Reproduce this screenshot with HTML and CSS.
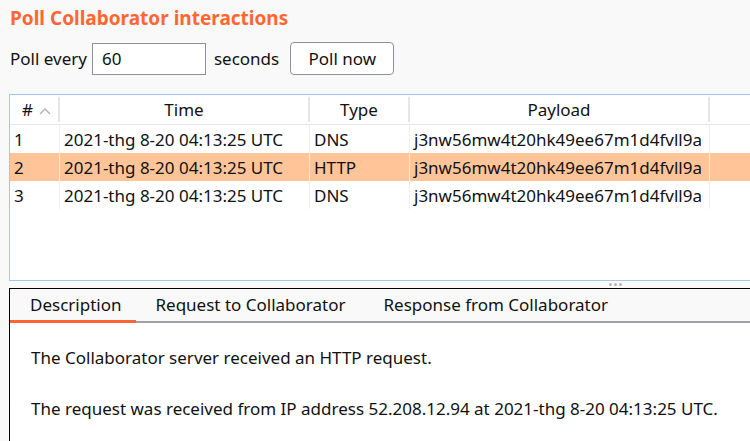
FILE: index.html
```html
<!DOCTYPE html>
<html>
<head>
<meta charset="utf-8">
<link rel="stylesheet" href="styles.css">
</head>
<body>
<div class="page">
  <h1 class="title">Poll Collaborator interactions</h1>
  <div class="controls">
    <span class="label">Poll every</span>
    <div class="input">60</div>
    <span class="label">seconds</span>
    <button class="btn">Poll now</button>
  </div>
  <div class="table-panel">
    <div class="row head">
      <div class="c c-num">#<svg class="caret" width="12" height="8" viewBox="0 0 12 8"><path d="M1 7 L6 2 L11 7" fill="none" stroke="#b0b0b0" stroke-width="1.3"/></svg></div>
      <div class="c c-time center">Time</div>
      <div class="c c-type center">Type</div>
      <div class="c c-pay center">Payload</div>
      <div class="c c-rest"></div>
    </div>
    <div class="row">
      <div class="c c-num">1</div>
      <div class="c c-time">2021-thg 8-20 04:13:25 UTC</div>
      <div class="c c-type">DNS</div>
      <div class="c c-pay">j3nw56mw4t20hk49ee67m1d4fvll9a</div>
      <div class="c c-rest"></div>
    </div>
    <div class="row sel">
      <div class="c c-num">2</div>
      <div class="c c-time">2021-thg 8-20 04:13:25 UTC</div>
      <div class="c c-type">HTTP</div>
      <div class="c c-pay">j3nw56mw4t20hk49ee67m1d4fvll9a</div>
      <div class="c c-rest"></div>
    </div>
    <div class="row">
      <div class="c c-num">3</div>
      <div class="c c-time">2021-thg 8-20 04:13:25 UTC</div>
      <div class="c c-type">DNS</div>
      <div class="c c-pay">j3nw56mw4t20hk49ee67m1d4fvll9a</div>
      <div class="c c-rest"></div>
    </div>
  </div>
  <div class="splitter"><span class="dot"></span><span class="dot"></span><span class="dot"></span></div>
  <div class="detail">
    <div class="tabs">
      <div class="tab active">Description</div>
      <div class="tab">Request to Collaborator</div>
      <div class="tab">Response from Collaborator</div>
    </div>
    <div class="content">
      <p>The Collaborator server received an HTTP request.</p>
      <p>The request was received from IP address 52.208.12.94 at 2021-thg 8-20 04:13:25 UTC.</p>
    </div>
  </div>
</div>
</body>
</html>
```
FILE: styles.css
```css
html, body {
  margin: 0;
  padding: 0;
  background: #f9f9f9;
  overflow: hidden;
  height: 441px;
}
.page {
  font-family: "Noto Sans", "Open Sans", sans-serif;
  font-size: 17px;
  color: #111;
  width: 770px;
}
.title {
  margin: 0;
  padding: 5px 0 0 10px;
  height: 32px;
  box-sizing: border-box;
  font-size: 19px;
  font-weight: bold;
  color: #ff6633;
  line-height: 26px;
}
.controls {
  display: flex;
  align-items: center;
  padding: 10px 0 0 10px;
  height: 33px;
  box-sizing: content-box;
}
.label {
  margin-right: 7px;
}
.label:first-child {
  margin-right: 5px;
}
.input {
  width: 114px;
  height: 32px;
  box-sizing: border-box;
  border: 1px solid #8f8f9d;
  background: #fff;
  padding-left: 9px;
  line-height: 30px;
  margin-right: 8px;
}
.btn {
  margin-left: 4px;
  width: 104px;
  height: 33px;
  box-sizing: border-box;
  border: 1px solid #8f8f9d;
  border-radius: 4px;
  background: #fff;
  font: inherit;
  color: #111;
  padding: 0;
}
.table-panel {
  margin: 19px 0 0 9px;
  height: 187px;
  box-sizing: border-box;
  border: 1px solid #a6c3e8;
  background: #fff;
}
.row {
  display: flex;
  height: 28px;
  line-height: 29px;
}
.row.head {
  height: 30px;
  line-height: 29px;
  border-bottom: 1px solid #e6e6e6;
  box-sizing: border-box;
}
.row.sel {
  background: #ffc599;
}
.c {
  box-sizing: border-box;
  padding-left: 4px;
  border-right: 1px solid #f0f0f0;
  white-space: nowrap;
}
.head .c {
  border-right: 2px solid #e6e6e6;
  margin: 2px 0;
  line-height: 25px;
}
.center { text-align: center; padding-left: 0; }
.c-num { width: 50px; }
.head .c-num { padding-left: 12px; }
.caret { margin-left: 6px; vertical-align: 1px; }
.c-time { width: 250px; }
.c-type { width: 100px; }
.c-pay { width: 300px; }
.c-rest { flex: 1; border-right: none; }
.splitter {
  height: 7px;
  display: flex;
  justify-content: center;
  align-items: center;
  gap: 2px;
  padding-left: 460px;
}
.dot {
  width: 3px;
  height: 3px;
  border-radius: 50%;
  background: #b5b5b5;
}
.detail {
  margin-left: 9px;
  border-top: 1px solid #000;
  border-left: 1px solid #000;
  height: 160px;
  background: #fff;
}
.tabs {
  display: flex;
  height: 34px;
  background: #f9f9f9;
  border-bottom: 2px solid #a0a0a8;
  box-sizing: border-box;
}
.tab {
  padding: 0 19px;
  line-height: 31px;
  white-space: nowrap;
}
.tab.active {
  padding: 0 15px 0 20px;
  border-bottom: 3px solid #ff6633;
  margin-bottom: -2px;
  height: 34px;
  box-sizing: border-box;
}
.content {
  padding: 23px 0 0 21px;
}
.content p {
  margin: 0 0 28px 0;
  line-height: 23px;
}
```
